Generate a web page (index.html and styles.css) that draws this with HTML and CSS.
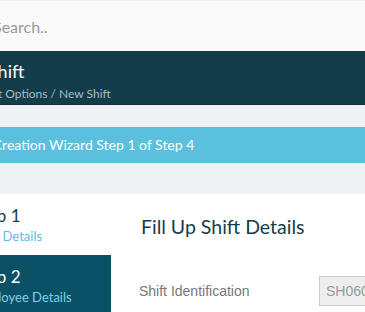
FILE: index.html
```html
<!DOCTYPE html>
<html lang="en">
<head>
    <link rel="stylesheet" href="styles.css">
</head>
<body>
    <div class="main">
        <div class="searchBar">
            <input class="searchInput" type="text" placeholder="Search..">
        </div>

        <div class="pageHeader">
            <div class="pageTitle">Shift</div>
            <div class="breadcrumb">Shift Options / New Shift</div>
        </div>

        <div class="wizardBar">Shift Creation Wizard Step 1 of Step 4</div>

        <div class="wizardPanel">
            <div class="steps">
                <div class="step">
                    <div class="stepTitle">Step 1</div>
                    <div class="stepName">Shift Details</div>
                </div>
                <div class="step stepActive">
                    <div class="stepTitle">Step 2</div>
                    <div class="stepName">Employee Details</div>
                </div>
            </div>
            <div class="stepContent">
                <h2 class="contentTitle">Fill Up Shift Details</h2>
                <div class="formRow">
                    <label class="formLabel" for="shiftId">Shift Identification</label>
                    <input class="formInput" id="shiftId" type="text" value="SH0601" readonly>
                </div>
            </div>
        </div>
    </div>
</body>
</html>
```

FILE: styles.css
```css
body {
    margin: 0;
    overflow: hidden;
    background-color: #f0f1f5;
    font-family: Lato, "Open Sans", sans-serif;
}

.main {
    margin-left: -30px;
}

.searchBar {
    margin-top: 1px;
    height: 50px;
    background-color: #f9f9f9;
    display: flex;
    align-items: center;
}

.searchInput {
    border: none;
    background: transparent;
    outline: none;
    padding: 0 0 0 23px;
    font-family: Lato, "Open Sans", sans-serif;
    font-size: 16px;
    color: #555;
    width: 300px;
}

.searchInput::placeholder {
    color: #999;
}

.pageHeader {
    height: 54px;
    box-sizing: border-box;
    background-color: #143d4b;
    border-bottom: 1px solid #0e2f3a;
    padding-left: 18px;
}

.pageTitle {
    color: #fff;
    font-size: 18px;
    padding-top: 9px;
    line-height: 22px;
}

.breadcrumb {
    color: #a7bcc4;
    font-size: 12px;
    margin-left: -10px;
    margin-top: 4px;
}

.wizardBar {
    margin-top: 22px;
    height: 36px;
    line-height: 36px;
    background-color: #5bc0de;
    color: #fff;
    font-size: 14px;
    text-indent: -9px;
}

.wizardPanel {
    margin-top: 31px;
    background-color: #fff;
    display: flex;
    height: 118px;
}

.steps {
    width: 141px;
    flex-shrink: 0;
}

.step {
    height: 61px;
    padding-left: 3px;
    box-sizing: border-box;
    padding-top: 12px;
}

.stepTitle {
    font-size: 17px;
    color: #1f3c4a;
    line-height: 20px;
}

.stepName {
    font-size: 13px;
    color: #5bc0de;
    margin-top: 2px;
}

.stepActive {
    height: 57px;
    background-color: #0a5166;
}

.stepActive .stepTitle {
    color: #fff;
}

.stepActive .stepName {
    color: #7fd0ea;
}

.stepContent {
    padding-left: 30px;
}

.contentTitle {
    margin: 0;
    padding-top: 21px;
    font-weight: normal;
    font-size: 19.5px;
    color: #143d4b;
}

.formRow {
    display: flex;
    align-items: center;
    margin-top: 38px;
}

.formLabel {
    width: 180px;
    margin-left: -2px;
    font-family: "Liberation Sans", Arial, sans-serif;
    font-size: 14px;
    color: #777;
}

.formInput {
    width: 120px;
    height: 30px;
    box-sizing: border-box;
    border: 1px solid #ccc;
    background-color: #eee;
    padding: 0 6px;
    font-family: "Liberation Sans", Arial, sans-serif;
    font-size: 14px;
    color: #999;
}
```
